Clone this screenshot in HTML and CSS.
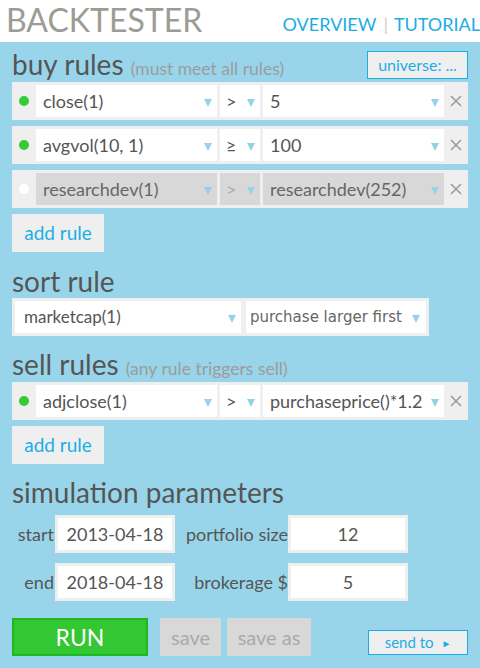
FILE: index.html
```html
<!DOCTYPE html>
<html>
<head>
<meta charset="utf-8">
<link rel="stylesheet" href="styles.css">
</head>
<body>
<header class="top">
  <div class="brand">BACKTESTER</div>
  <nav class="nav"><a class="link">OVERVIEW</a><span class="sep">|</span><a class="link">TUTORIAL</a></nav>
</header>
<main class="panel">
  <div class="sec-head">
    <h2 class="title">buy rules <span class="note">(must meet all rules)</span></h2>
    <div class="universe">universe: ...</div>
  </div>

  <div class="rule">
    <span class="dot on"></span>
    <div class="sel wide"><span class="val">close(1)</span><span class="tri"></span></div>
    <div class="sel op"><span class="val">&gt;</span><span class="tri"></span></div>
    <div class="sel wide"><span class="val">5</span><span class="tri"></span></div>
    <span class="del"><svg width="12" height="12" viewBox="0 0 12 12"><path d="M1 1L11 11M11 1L1 11" stroke="#9a9a9a" stroke-width="1.5" fill="none"/></svg></span>
  </div>
  <div class="rule">
    <span class="dot on"></span>
    <div class="sel wide"><span class="val">avgvol(10, 1)</span><span class="tri"></span></div>
    <div class="sel op"><span class="val">≥</span><span class="tri"></span></div>
    <div class="sel wide"><span class="val">100</span><span class="tri"></span></div>
    <span class="del"><svg width="12" height="12" viewBox="0 0 12 12"><path d="M1 1L11 11M11 1L1 11" stroke="#9a9a9a" stroke-width="1.5" fill="none"/></svg></span>
  </div>
  <div class="rule off">
    <span class="dot"></span>
    <div class="sel wide"><span class="val">researchdev(1)</span><span class="tri"></span></div>
    <div class="sel op"><span class="val">&gt;</span><span class="tri"></span></div>
    <div class="sel wide"><span class="val">researchdev(252)</span><span class="tri"></span></div>
    <span class="del"><svg width="12" height="12" viewBox="0 0 12 12"><path d="M1 1L11 11M11 1L1 11" stroke="#9a9a9a" stroke-width="1.5" fill="none"/></svg></span>
  </div>
  <div class="btn add">add rule</div>

  <h2 class="title sort-title">sort rule</h2>
  <div class="sort">
    <div class="sel sort1"><span class="val">marketcap(1)</span><span class="tri"></span></div>
    <div class="sel sort2"><span class="val dv">purchase larger first</span><span class="tri"></span></div>
  </div>

  <h2 class="title sell-title">sell rules <span class="note">(any rule triggers sell)</span></h2>
  <div class="rule">
    <span class="dot on"></span>
    <div class="sel wide"><span class="val">adjclose(1)</span><span class="tri"></span></div>
    <div class="sel op"><span class="val">&gt;</span><span class="tri"></span></div>
    <div class="sel wide"><span class="val">purchaseprice()*1.2</span><span class="tri"></span></div>
    <span class="del"><svg width="12" height="12" viewBox="0 0 12 12"><path d="M1 1L11 11M11 1L1 11" stroke="#9a9a9a" stroke-width="1.5" fill="none"/></svg></span>
  </div>
  <div class="btn add">add rule</div>

  <h2 class="title sim-title">simulation parameters</h2>
  <div class="params">
    <label class="lbl l1">start</label><div class="inp">2013-04-18</div>
    <label class="lbl l2">portfolio size</label><div class="inp">12</div>
    <label class="lbl l1">end</label><div class="inp">2018-04-18</div>
    <label class="lbl l2">brokerage $</label><div class="inp">5</div>
  </div>

  <div class="actions">
    <div class="run">RUN</div>
    <div class="btn dis save">save</div>
    <div class="btn dis saveas">save as</div>
    <div class="sendto">send to <span class="play">►</span></div>
  </div>
</main>
</body>
</html>
```

FILE: styles.css
```css
* { box-sizing: border-box; }
html, body { margin: 0; padding: 0; }
body {
  width: 480px;
  height: 668px;
  overflow: hidden;
  font-family: Lato, "Liberation Sans", sans-serif;
  color: #555;
  background: #99d5ea;
}
.top {
  height: 42px;
  background: #fff;
  display: flex;
  justify-content: space-between;
  align-items: flex-start;
}
.brand {
  margin-left: 6px;
  font-size: 32px;
  line-height: 39px;
  color: #9c9c94;
}
.nav {
  margin-top: 14px;
  padding-right: 0;
  font-size: 18px;
  line-height: 20px;
  display: flex;
  white-space: nowrap;
}
.link { color: #1aaee6; }
.sep { color: #ccc; margin: 0 6px 0 7px; }

.panel {
  padding: 6px 12px 0 12px;
  height: 626px;
}
.sec-head {
  display: flex;
  justify-content: space-between;
  align-items: flex-start;
  height: 34px;
}
.title {
  margin: 0;
  font-size: 28px;
  font-weight: normal;
  line-height: 32px;
  height: 32px;
  color: #555;
  white-space: nowrap;
}
.note {
  font-size: 17.5px;
  line-height: 1;
  color: #9c9c9c;
}
.universe {
  margin-top: 3px;
  height: 28px;
  width: 101px;
  border: 1px solid #1aaee6;
  background: #efefef;
  color: #1aaee6;
  font-size: 16px;
  line-height: 26px;
  text-align: center;
}
.rule {
  display: flex;
  align-items: center;
  height: 38px;
  width: 456px;
  padding: 3px 0;
  background: #efefef;
  margin-bottom: 6px;
}
.dot {
  width: 10px;
  height: 10px;
  border-radius: 50%;
  background: #fff;
  margin: 0 7px 0 7px;
  flex: none;
}
.dot.on { background: #33cc33; }
.sel {
  height: 32px;
  background: #fff;
  display: flex;
  align-items: center;
  justify-content: space-between;
  padding: 0 5px 0 7px;
  font-size: 18px;
  line-height: 32px;
  color: #555;
  flex: none;
  white-space: nowrap;
}
.wide { width: 181px; }
.op { width: 40px; margin: 0 3px; padding-left: 6px; }
.tri {
  width: 0;
  height: 0;
  border-left: 4.5px solid transparent;
  border-right: 4.5px solid transparent;
  border-top: 8px solid #94d2ea;
  margin-top: 4px;
  flex: none;
}
.del {
  width: 24px;
  display: flex;
  justify-content: center;
  align-items: center;
  flex: none;
}
.rule.off .sel { background: #d8d8d8; color: #666; }
.rule.off .op .val { color: #aaa; }

.btn {
  height: 38px;
  background: #efefef;
  font-size: 19px;
  line-height: 38px;
  text-align: center;
}
.add {
  width: 92px;
  color: #1aaee6;
}
.sort-title { margin-top: 13px; margin-bottom: 1px; }
.sort {
  display: flex;
  width: 417px;
  height: 38px;
  padding: 3px;
  gap: 5px;
  background: #efefef;
}
.sort1 { width: 226px; font-size: 17px; padding-left: 9px; }
.sort2 { width: 180px; padding-left: 4px; padding-right: 6px; }
.dv {
  font-family: "DejaVu Sans", sans-serif;
  font-size: 15px;
  color: #666;
}
.sell-title { margin-top: 12px; margin-bottom: 2px; }
.sim-title { margin-top: 12px; margin-bottom: 7px; }

.params {
  display: grid;
  grid-template-columns: 43px 120px 113px 120px;
  grid-auto-rows: 38px;
  row-gap: 10px;
  align-items: center;
}
.lbl {
  font-size: 18px;
  text-align: right;
  padding-right: 1px;
  color: #555;
  white-space: nowrap;
}
.l2 { padding-right: 0; }
.inp {
  height: 38px;
  border: 3px solid #efefef;
  background: #fff;
  text-align: center;
  font-size: 18px;
  line-height: 32px;
  color: #555;
}
.actions {
  margin-top: 17px;
  display: flex;
  align-items: flex-start;
}
.run {
  width: 136px;
  height: 38px;
  background: #33c833;
  border: 2px solid #20b820;
  color: #fff;
  font-size: 23px;
  line-height: 34px;
  text-align: center;
}
.dis {
  background: #d8d8d8;
  color: #aaa;
  font-size: 20px;
}
.save { width: 61px; margin-left: 12px; }
.saveas { width: 84px; margin-left: 6px; }
.sendto {
  margin-left: 57px;
  margin-top: 12px;
  width: 100px;
  height: 25px;
  border: 1px solid #1aaee6;
  background: #efefef;
  color: #1aaee6;
  font-size: 15px;
  line-height: 23px;
  text-align: center;
}
.play { font-size: 10px; margin-left: 4px; vertical-align: 1px; }
```
